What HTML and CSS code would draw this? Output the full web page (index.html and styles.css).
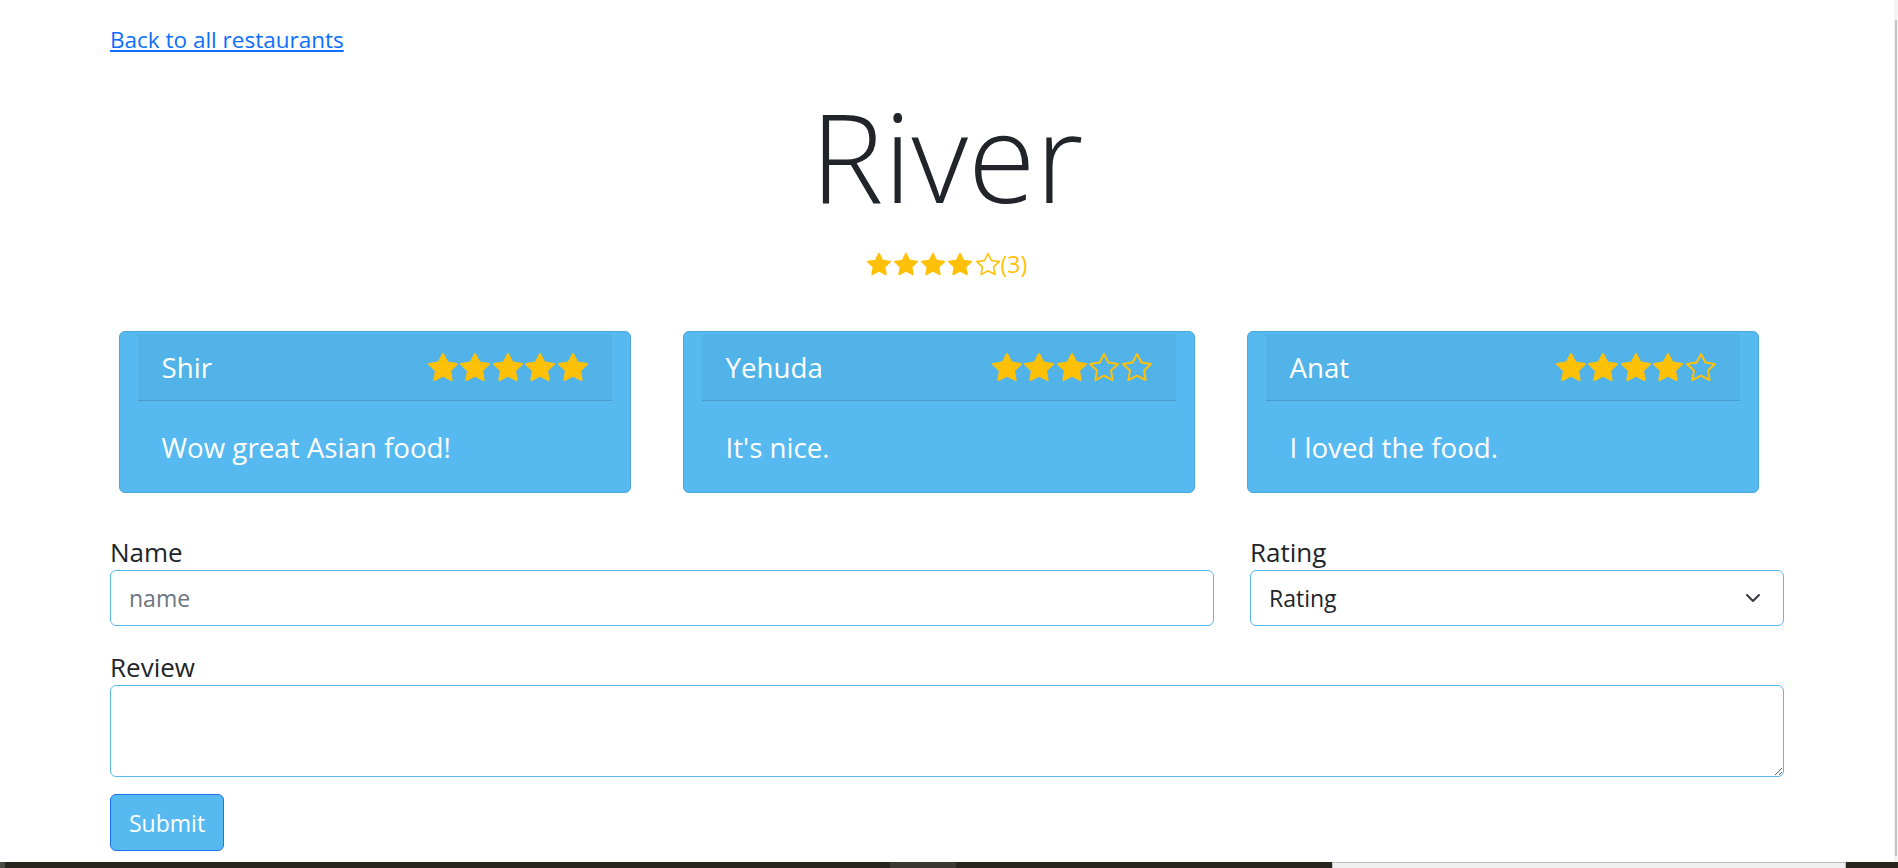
FILE: index.html
```html
<!DOCTYPE html>
<html lang="en">
<head>
<meta charset="utf-8">
<title>River</title>
<link rel="stylesheet" href="styles.css">
</head>
<body>
<svg class="icon-defs" xmlns="http://www.w3.org/2000/svg">
  <symbol id="star-fill" viewBox="0 0 16 16"><path d="M3.612 15.443c-.386.198-.824-.149-.746-.592l.83-4.73L.173 6.765c-.329-.314-.158-.888.283-.95l4.898-.696L7.538.792c.197-.39.73-.39.927 0l2.184 4.327 4.898.696c.441.062.612.636.282.95l-3.522 3.356.83 4.73c.078.443-.36.79-.746.592L8 13.187l-4.389 2.256z"/></symbol>
  <symbol id="star-empty" viewBox="0 0 16 16"><path d="M2.866 14.85c-.078.444.36.791.746.593l4.39-2.256 4.389 2.256c.386.198.824-.149.746-.592l-.83-4.73 3.522-3.356c.33-.314.16-.888-.282-.95l-4.898-.696L8.465.792a.513.513 0 0 0-.927 0L5.354 5.120l-4.898.696c-.441.062-.612.636-.283.95l3.523 3.356-.83 4.73zm4.905-2.767-3.686 1.894.694-3.957a.565.565 0 0 0-.163-.505L1.71 6.745l4.052-.576a.525.525 0 0 0 .393-.288L8 2.223l1.847 3.658a.525.525 0 0 0 .393.288l4.052.575-2.906 2.77a.565.565 0 0 0-.163.506l.694 3.957-3.686-1.894a.503.503 0 0 0-.461 0z"/></symbol>
</svg>
<div class="container">
  <div class="back"><a href="#" class="back-link">Back to all restaurants</a></div>
  <h1 class="title">River</h1>
  <div class="overall">
    <span class="stars stars-lg">
      <svg class="star"><use href="#star-fill"/></svg>
      <svg class="star"><use href="#star-fill"/></svg>
      <svg class="star"><use href="#star-fill"/></svg>
      <svg class="star"><use href="#star-fill"/></svg>
      <svg class="star"><use href="#star-empty"/></svg>
    </span><span class="count">(3)</span>
  </div>

  <div class="cards">
    <div class="card">
      <div class="card-header">
        <span class="reviewer">Shir</span>
        <span class="stars stars-card">
          <svg class="star"><use href="#star-fill"/></svg>
          <svg class="star"><use href="#star-fill"/></svg>
          <svg class="star"><use href="#star-fill"/></svg>
          <svg class="star"><use href="#star-fill"/></svg>
          <svg class="star"><use href="#star-fill"/></svg>
        </span>
      </div>
      <div class="card-body">Wow great Asian food!</div>
    </div>
    <div class="card">
      <div class="card-header">
        <span class="reviewer">Yehuda</span>
        <span class="stars stars-card">
          <svg class="star"><use href="#star-fill"/></svg>
          <svg class="star"><use href="#star-fill"/></svg>
          <svg class="star"><use href="#star-fill"/></svg>
          <svg class="star"><use href="#star-empty"/></svg>
          <svg class="star"><use href="#star-empty"/></svg>
        </span>
      </div>
      <div class="card-body">It's nice.</div>
    </div>
    <div class="card">
      <div class="card-header">
        <span class="reviewer">Anat</span>
        <span class="stars stars-card">
          <svg class="star"><use href="#star-fill"/></svg>
          <svg class="star"><use href="#star-fill"/></svg>
          <svg class="star"><use href="#star-fill"/></svg>
          <svg class="star"><use href="#star-fill"/></svg>
          <svg class="star"><use href="#star-empty"/></svg>
        </span>
      </div>
      <div class="card-body">I loved the food.</div>
    </div>
  </div>

  <form class="review-form">
    <div class="form-row">
      <div class="field field-name">
        <label class="form-label" for="name">Name</label>
        <input id="name" class="form-control" type="text" placeholder="name">
      </div>
      <div class="field field-rating">
        <label class="form-label" for="rating">Rating</label>
        <div class="select-wrap">
          <select id="rating" class="form-control form-select">
            <option>Rating</option>
            <option>1</option>
            <option>2</option>
            <option>3</option>
            <option>4</option>
            <option>5</option>
          </select>
          <svg class="chevron" viewBox="0 0 16 10"><polyline points="2,2 8,8 14,2"/></svg>
        </div>
      </div>
    </div>
    <div class="field field-review">
      <label class="form-label" for="review">Review</label>
      <textarea id="review" class="form-control form-textarea" rows="2"></textarea>
    </div>
    <button type="submit" class="btn-submit">Submit</button>
  </form>
</div>

<div class="vscroll"><div class="vthumb"></div></div>
<div class="taskbar">
  <div class="tb-seg tb-edge"></div>
  <div class="tb-seg tb-dark tb-w1"></div>
  <div class="tb-seg tb-mid"></div>
  <div class="tb-seg tb-dark tb-w2"></div>
  <div class="tb-seg tb-light"></div>
  <div class="tb-seg tb-dark tb-w3"></div>
</div>
</body>
</html>
```

FILE: styles.css
```css
html, body {
  margin: 0;
  padding: 0;
}

body {
  font-family: "Open Sans", "Noto Sans", "DejaVu Sans", sans-serif;
  font-size: 23px;
  line-height: 36px;
  color: #212529;
  background: #ffffff;
}

.icon-defs {
  display: none;
}

.container {
  width: 1674px;
  margin-left: 110px;
}

.back {
  padding-top: 21px;
  height: 36px;
}

.back-link {
  font-size: 22.5px;
  color: #0d6efd;
  text-decoration: underline;
}

.title {
  margin: 27px 0 0;
  font-weight: 300;
  font-size: 123px;
  line-height: 144px;
  text-align: center;
  color: #212529;
}

.overall {
  margin-top: 18px;
  height: 36px;
  display: flex;
  justify-content: center;
  align-items: center;
  color: #ffc107;
}

.stars {
  display: flex;
  align-items: center;
  fill: #ffc107;
}

.stars-lg {
  gap: 3.2px;
}

.stars-lg .star {
  width: 24px;
  height: 24px;
}

.count {
  font-size: 23px;
  line-height: 36px;
  margin-left: 1px;
}

.cards {
  margin-top: 49px;
  display: flex;
  gap: 52px;
  padding-left: 8.5px;
}

.card {
  width: 512px;
  box-sizing: border-box;
  background: #56baf1;
  border: 1px solid #4aa6dc;
  border-radius: 6px;
  padding: 1.5px 18px 0;
  color: #ffffff;
  font-size: 27.7px;
}

.card-header {
  height: 42px;
  line-height: 42px;
  padding: 12px 24px;
  display: flex;
  justify-content: space-between;
  align-items: center;
  background: rgba(0, 0, 0, 0.035);
  border-bottom: 1px solid rgba(0, 0, 0, 0.13);
}

.stars-card {
  gap: 2.5px;
}

.stars-card .star {
  width: 30px;
  height: 30px;
}

.card-body {
  padding: 24px 24px 22.5px;
  line-height: 45px;
}

.review-form {
  margin-top: 41px;
}

.form-row {
  display: flex;
  gap: 36px;
  margin-bottom: 23px;
}

.field-name {
  width: 1104px;
}

.field-rating {
  width: 534px;
}

.form-label {
  display: block;
  font-size: 26px;
  line-height: 36px;
}

.form-control {
  display: block;
  width: 100%;
  box-sizing: border-box;
  height: 56px;
  margin: 0;
  padding: 9px 18px;
  font-family: inherit;
  font-size: 23px;
  line-height: 36px;
  color: #212529;
  background: #ffffff;
  border: 1px solid #5ab9ef;
  border-radius: 6px;
  outline: none;
}

.form-control::placeholder {
  color: #6c757d;
  opacity: 1;
}

.select-wrap {
  position: relative;
}

.form-select {
  appearance: none;
  -webkit-appearance: none;
  padding-right: 54px;
}

.chevron {
  position: absolute;
  right: 23px;
  top: 23px;
  width: 16px;
  height: 10px;
  fill: none;
  stroke: #343a40;
  stroke-width: 2;
  stroke-linecap: round;
  stroke-linejoin: round;
  pointer-events: none;
}

.form-textarea {
  height: 92px;
  resize: vertical;
}

.btn-submit {
  margin-top: 17px;
  height: 57px;
  padding: 9px 18px;
  font-family: inherit;
  font-size: 23px;
  line-height: 36px;
  color: #ffffff;
  background: #56baf1;
  border: 1px solid #1c72f2;
  border-radius: 6px;
  cursor: pointer;
}

.vscroll {
  position: fixed;
  top: 0;
  right: 0;
  width: 4px;
  height: 100%;
  background: #f4f4f4;
}

.vthumb {
  margin: 20px 0 0 1px;
  width: 2px;
  height: 836px;
  background: #c4c4c4;
}

.taskbar {
  position: fixed;
  left: 0;
  bottom: 0;
  width: 100%;
  height: 6px;
  display: flex;
}

.tb-seg {
  height: 100%;
}

.tb-edge {
  width: 5px;
  background: #4a4a44;
}

.tb-dark {
  background: #26261e;
}

.tb-w1 {
  width: 885px;
}

.tb-mid {
  width: 66px;
  background: #3a3a32;
}

.tb-w2 {
  width: 376px;
}

.tb-light {
  width: 514px;
  box-sizing: border-box;
  background: #efefef;
  border-top: 1px solid #bdbdbd;
  border-left: 1px solid #bdbdbd;
  border-right: 1px solid #bdbdbd;
}

.tb-w3 {
  flex: 1;
}
```
